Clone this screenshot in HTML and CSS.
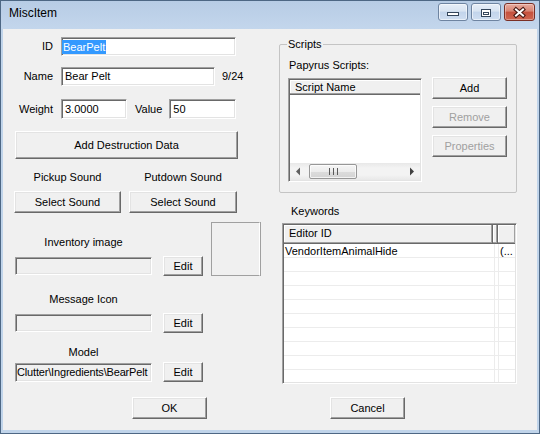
FILE: index.html
```html
<!DOCTYPE html>
<html>
<head>
<meta charset="utf-8">
<title>MiscItem</title>
<link rel="stylesheet" href="styles.css">
</head>
<body>
<div class="window">
  <div class="titlebar">
    <div class="title">MiscItem</div>
    <div class="caption-buttons">
      <div class="cap cap-min">
        <svg class="cap-glyph" viewBox="0 0 28 16" width="28" height="16"><rect x="8.5" y="8.5" width="11" height="3" fill="#fff" stroke="#34465c"/></svg>
      </div>
      <div class="cap cap-max">
        <svg class="cap-glyph" viewBox="0 0 28 16" width="28" height="16"><rect x="9.5" y="5.5" width="9" height="7" fill="#fff" stroke="#34465c"/><rect x="11.5" y="8.5" width="5" height="2" fill="#fff" stroke="#34465c"/></svg>
      </div>
      <div class="cap cap-close">
        <svg class="cap-glyph" viewBox="0 0 29 16" width="29" height="16"><path d="M11 5.5 L18 11.5 M18 5.5 L11 11.5" stroke="#4a1a14" stroke-width="4.2" stroke-linecap="square"/><path d="M11 5.5 L18 11.5 M18 5.5 L11 11.5" stroke="#fff" stroke-width="2" stroke-linecap="square"/></svg>
      </div>
    </div>
  </div>
  <div class="client">
    <div class="main">
      <div class="left">
        <div class="row row-id"><span class="lbl">ID</span><div class="field field-id"><span class="sel">BearPelt</span></div></div>
        <div class="row row-name"><span class="lbl">Name</span><div class="field field-name">Bear Pelt</div><span class="count">9/24</span></div>
        <div class="row row-weight"><span class="lbl">Weight</span><div class="field field-weight">3.0000</div><span class="lbl-value">Value</span><div class="field field-value">50</div></div>
        <div class="btn btn-destruction">Add Destruction Data</div>
        <div class="sounds">
          <div class="sound sound-pickup"><div class="sound-lbl">Pickup Sound</div><div class="btn btn-sound">Select Sound</div></div>
          <div class="sound sound-putdown"><div class="sound-lbl">Putdown Sound</div><div class="btn btn-sound">Select Sound</div></div>
        </div>
        <div class="asset asset-inventory">
          <div class="asset-main">
            <div class="asset-lbl">Inventory image</div>
            <div class="asset-row"><div class="field field-asset"></div><div class="btn btn-edit">Edit</div></div>
          </div>
          <div class="image-box"></div>
        </div>
        <div class="asset asset-message">
          <div class="asset-main">
            <div class="asset-lbl">Message Icon</div>
            <div class="asset-row"><div class="field field-asset"></div><div class="btn btn-edit">Edit</div></div>
          </div>
        </div>
        <div class="asset asset-model">
          <div class="asset-main">
            <div class="asset-lbl">Model</div>
            <div class="asset-row"><div class="field field-asset field-model">Clutter\Ingredients\BearPelt</div><div class="btn btn-edit">Edit</div></div>
          </div>
        </div>
      </div>
      <div class="right">
        <div class="groupbox">
          <div class="group-title">Scripts</div>
          <div class="papyrus-lbl">Papyrus Scripts:</div>
          <div class="scripts-row">
            <div class="list scripts-list">
              <div class="lv-header"><div class="lv-col lv-col-full">Script Name</div></div>
              <div class="lv-body"></div>
              <div class="hscroll">
                <div class="sb-arrow"><svg viewBox="0 0 17 17" width="17" height="17"><path d="M6 8.5 L10 4.5 L10 12.5 Z" fill="#606060"/></svg></div>
                <div class="sb-track">
                  <div class="sb-thumb"><svg viewBox="0 0 9 7" width="9" height="7"><path d="M0.5 0 V7 M4.5 0 V7 M8.5 0 V7" stroke="#5a5a5a" stroke-width="1"/></svg></div>
                </div>
                <div class="sb-arrow"><svg viewBox="0 0 17 17" width="17" height="17"><path d="M11 8.5 L7 4.5 L7 12.5 Z" fill="#404040"/></svg></div>
              </div>
            </div>
            <div class="script-buttons">
              <div class="btn btn-side">Add</div>
              <div class="btn btn-side disabled">Remove</div>
              <div class="btn btn-side disabled">Properties</div>
            </div>
          </div>
        </div>
        <div class="keywords-lbl">Keywords</div>
        <div class="list keywords-list">
          <div class="lv-header">
            <div class="lv-col kw-col1">Editor ID</div>
            <div class="lv-col kw-col2"></div>
            <div class="lv-col kw-col3"></div>
          </div>
          <div class="lv-body kw-body">
            <div class="kw-row"><div class="kw-cell1">VendorItemAnimalHide</div><div class="kw-cell2">(...</div></div>
          </div>
        </div>
      </div>
    </div>
    <div class="footer">
      <div class="btn btn-dlg">OK</div>
      <div class="btn btn-dlg">Cancel</div>
    </div>
  </div>
</div>
</body>
</html>
```

FILE: styles.css
```css
* { box-sizing: border-box; }
html, body { margin: 0; padding: 0; }
body {
  width: 540px;
  height: 434px;
  overflow: hidden;
  font-family: "Liberation Sans", Arial, sans-serif;
  font-size: 11px;
  color: #000;
  background: #fff;
}

.window {
  width: 540px;
  height: 434px;
  border: 1px solid #4d6784;
  background: #c0d4ea;
  padding: 0 2px 3px 2px;
  display: flex;
  flex-direction: column;
}

.titlebar {
  height: 28px;
  display: flex;
  align-items: flex-start;
  background: linear-gradient(#b7cce5, #c3d6ec);
  margin: 0 -2px;
  padding: 0 2px;
}
.title {
  font-size: 12px;
  line-height: 25px;
  padding-left: 6px;
}
.caption-buttons {
  margin-left: auto;
  margin-top: 2px;
  margin-right: 2px;
  display: flex;
  gap: 3px;
}
.cap {
  width: 30px;
  height: 18px;
  border: 1px solid #6e84a1;
  border-radius: 3px;
  background: linear-gradient(#e6eef8 0%, #d8e4f2 45%, #c2d4eb 50%, #cfdef1 100%);
  box-shadow: inset 0 0 0 1px rgba(255,255,255,0.55);
  display: flex;
}
.cap-close {
  width: 31px;
  border-color: #7a2f25;
  background: linear-gradient(#e8ab9f 0%, #d88472 45%, #c5503c 50%, #cf6650 100%);
  box-shadow: inset 0 0 0 1px rgba(255,255,255,0.35);
}
.cap-glyph { display: block; }

.client {
  flex: 1;
  background: #f0f0f0;
  display: flex;
  flex-direction: column;
  padding-left: 11px;
}
.main {
  display: flex;
  height: 355px;
}
.left {
  width: 265px;
  display: flex;
  flex-direction: column;
  align-items: flex-start;
}
.right {
  width: 238px;
  display: flex;
  flex-direction: column;
  align-items: flex-start;
}

.row { display: flex; align-items: center; }
.lbl {
  width: 39px;
  text-align: right;
  margin-right: 8px;
  line-height: 13px;
}
.row-id { margin-top: 8px; }
.row-name { margin-top: 11px; }
.row-weight { margin-top: 13px; }

.field {
  height: 19px;
  background: #fff;
  border: 1px solid;
  border-color: #a0a0a0 #fff #fff #a0a0a0;
  box-shadow: inset 1px 1px 0 #696969, inset -1px -1px 0 #e3e3e3;
  padding: 0 3px;
  line-height: 17px;
  white-space: nowrap;
  overflow: hidden;
}
.field-id { width: 175px; padding-left: 0; }
.sel {
  display: inline-block;
  background: #3399ff;
  color: #fff;
  padding: 0 1px;
  line-height: 14px;
  vertical-align: middle;
}
.field-name { width: 154px; }
.count { margin-left: 7px; line-height: 13px; }
.field-weight { width: 66px; height: 20px; line-height: 18px; }
.lbl-value { margin: 0 7px 0 8px; line-height: 13px; }
.field-value { width: 67px; height: 20px; line-height: 18px; }

.btn {
  display: flex;
  align-items: center;
  justify-content: center;
  height: 22px;
  background: #f0f0f0;
  border: 1px solid;
  border-color: #fff #696969 #696969 #fff;
  box-shadow: inset -1px -1px 0 #a0a0a0, inset 1px 1px 0 #e3e3e3;
  line-height: 13px;
  white-space: nowrap;
}
.btn.disabled { color: #a0a0a0; }
.btn-destruction {
  width: 223px;
  height: 28px;
  margin-top: 12px;
  margin-left: 1px;
}

.sounds {
  display: flex;
  gap: 8px;
  margin-top: 11px;
}
.sound {
  display: flex;
  flex-direction: column;
  align-items: center;
}
.sound-pickup { width: 107px; }
.sound-putdown { width: 108px; }
.sound-lbl { line-height: 14px; margin-bottom: 7px; }
.btn-sound { width: 100%; }

.asset {
  display: flex;
  align-items: flex-end;
  margin-left: 1px;
}
.asset-main { display: flex; flex-direction: column; }
.asset-lbl {
  width: 137px;
  text-align: center;
  line-height: 14px;
  margin-bottom: 7px;
}
.asset-row {
  display: flex;
  align-items: center;
  gap: 11px;
  height: 20px;
}
.field-asset {
  width: 137px;
  height: 18px;
  background: #f0f0f0;
  line-height: 16px;
  padding-left: 2px;
}
.field-model { height: 19px; line-height: 17px; letter-spacing: -0.17px; padding-left: 1px; }
.btn-edit { width: 40px; height: 20px; }
.image-box {
  width: 49px;
  height: 54px;
  margin-left: 8px;
  border: 1px solid #a0a0a0;
  border-right-color: #fff;
  border-bottom-color: #a0a0a0;
  box-shadow: 1px 0 0 #a0a0a0;
}
.asset-inventory { margin-top: 9px; }
.asset-message { margin-top: 16px; }
.asset-model { margin-top: 12px; }
.asset-model .asset-lbl { margin-bottom: 3px; }

.groupbox {
  width: 238px;
  margin-top: 15px;
  border: 1px solid #c4c4c4;
  border-radius: 2px;
  padding: 0 0 10px 8px;
  display: flex;
  flex-direction: column;
  align-items: flex-start;
}
.group-title {
  margin-top: -7px;
  margin-left: -1px;
  padding: 0 1px;
  line-height: 13px;
  background: #f0f0f0;
}
.papyrus-lbl { margin-top: 8px; margin-left: 1px; line-height: 13px; }
.scripts-row {
  display: flex;
  gap: 10px;
  margin-top: 5px;
}
.list {
  background: #fff;
  border: 1px solid;
  border-color: #a0a0a0 #fff #fff #a0a0a0;
  box-shadow: inset 1px 1px 0 #696969, inset -1px -1px 0 #e3e3e3;
  padding: 1px;
  display: flex;
  flex-direction: column;
  overflow: hidden;
}
.scripts-list {
  width: 134px;
  height: 104px;
  margin-top: 1px;
}
.lv-header {
  display: flex;
  height: 15px;
  flex: none;
}
.lv-col {
  background: #f0f0f0;
  border-right: 1px solid #696969;
  border-bottom: 1px solid #696969;
  box-shadow: inset -1px -1px 0 #a0a0a0, inset 1px 1px 0 #fff;
  line-height: 14px;
  padding-left: 5px;
  white-space: nowrap;
  overflow: hidden;
}
.lv-col-full { flex: 1; border-right: none; box-shadow: inset 0 -1px 0 #a0a0a0, inset 1px 1px 0 #fff; }
.lv-body { flex: 1; }
.hscroll {
  height: 17px;
  flex: none;
  display: flex;
  background: linear-gradient(#e8e8e8, #f3f3f3 30%, #f3f3f3 70%, #e8e8e8);
}
.sb-arrow { width: 17px; height: 17px; flex: none; }
.sb-arrow svg { display: block; }
.sb-track { flex: 1; display: flex; padding: 1px 0 0 2px; }
.sb-thumb {
  width: 48px;
  height: 15px;
  border: 1px solid #979797;
  border-radius: 2px;
  background: linear-gradient(#f5f5f5 0%, #ececec 50%, #dcdcdc 51%, #d4d4d4 100%);
  box-shadow: inset 0 0 0 1px rgba(255,255,255,0.7);
  display: flex;
  align-items: center;
  justify-content: center;
}
.sb-thumb svg { display: block; }
.script-buttons {
  display: flex;
  flex-direction: column;
  gap: 7px;
}
.btn-side { width: 75px; height: 22px; }

.keywords-lbl { margin-top: 12px; margin-left: 12px; line-height: 13px; }
.keywords-list {
  width: 235px;
  height: 161px;
  margin-left: 3px;
  margin-top: 5px;
}
.keywords-list .lv-header { height: 19px; }
.keywords-list .lv-col { line-height: 17px; }
.kw-col1 { width: 209px; }
.kw-col2 { width: 5px; padding: 0; }
.kw-col3 { flex: 1; border-right: none; padding: 0; }
.kw-body {
  background-image:
    linear-gradient(to right, transparent 210px, #ececec 210px, #ececec 211px, transparent 211px, transparent 214px, #ececec 214px, #ececec 215px, transparent 215px),
    linear-gradient(to bottom, #fff 13px, #ececec 13px);
  background-size: 100% 100%, 100% 14px;
  background-repeat: no-repeat, repeat;
  background-color: #fff;
}
.kw-row { display: flex; height: 14px; line-height: 14px; white-space: nowrap; }
.kw-cell1 { width: 210px; padding-left: 1px; overflow: hidden; }
.kw-cell2 { padding-left: 6px; }

.footer {
  display: flex;
  gap: 123px;
  margin-left: 118px;
  margin-top: 13px;
}
.btn-dlg { width: 75px; height: 22px; }
```
